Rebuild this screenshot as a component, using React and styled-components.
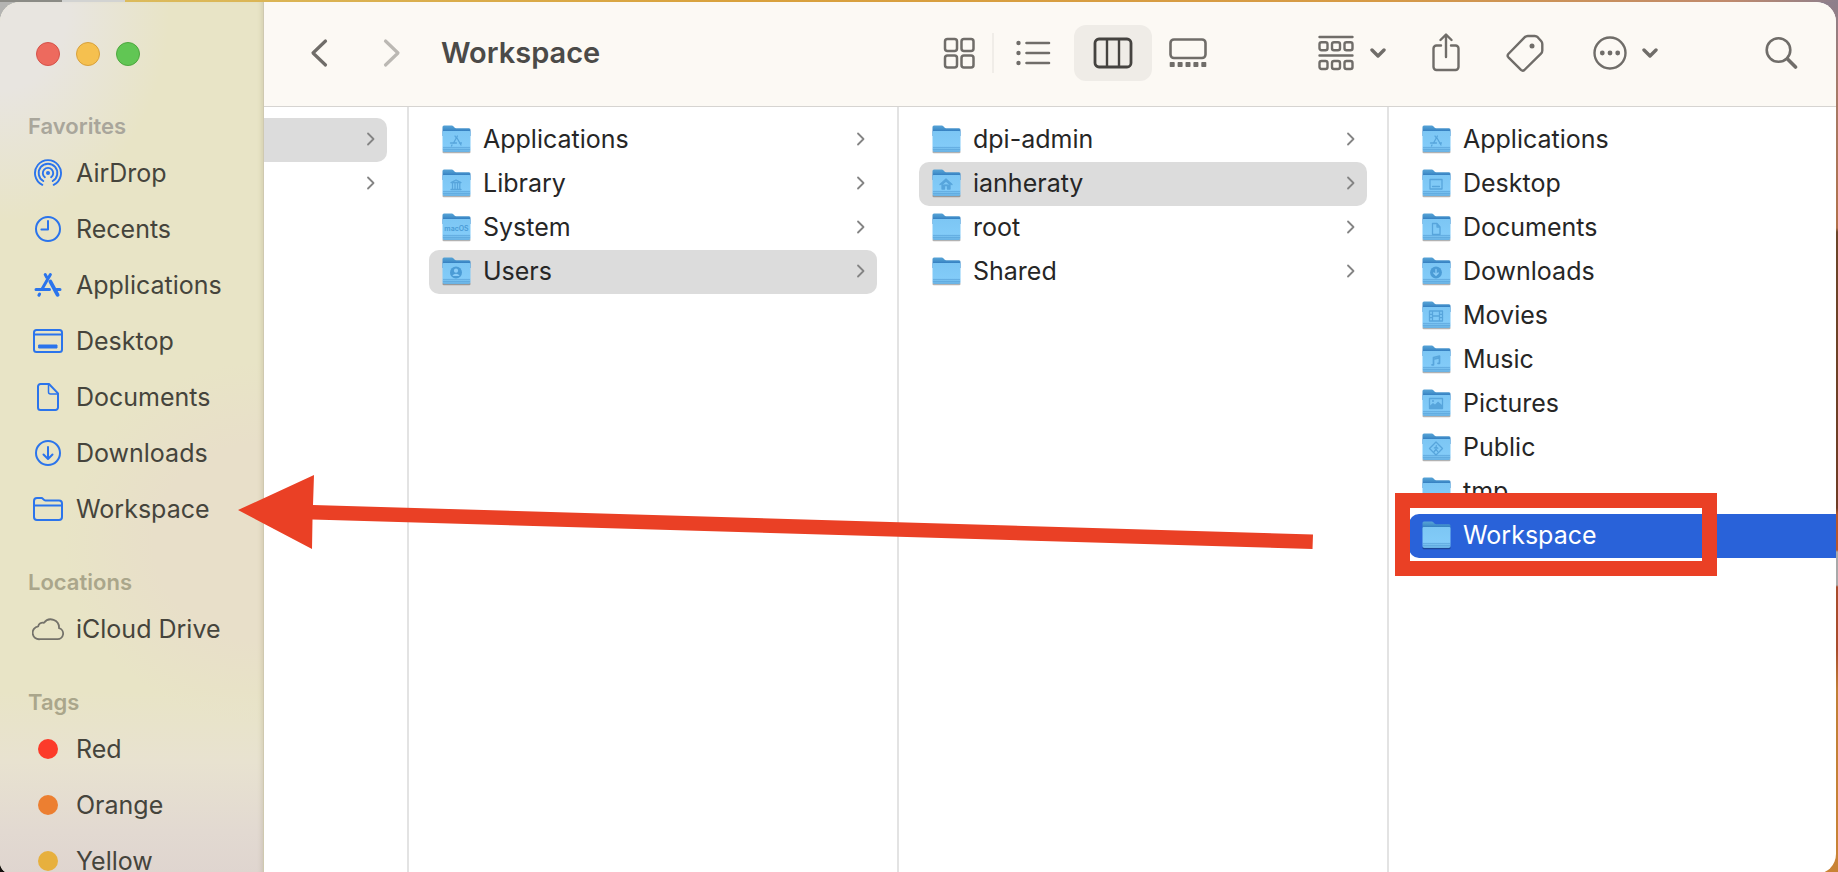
import React from 'react';
import styled, { createGlobalStyle, css } from 'styled-components';

const GlobalStyle = createGlobalStyle`
  *, *::before, *::after { box-sizing: border-box; }
  body {
    margin: 0;
    font-family: Inter, "Liberation Sans", sans-serif;
    color: #262626;
  }
  button { font: inherit; color: inherit; border: 0; background: none; padding: 0; margin: 0; }
  ul { list-style: none; margin: 0; padding: 0; }
  a { color: inherit; text-decoration: none; }
  svg { display: block; flex: none; }
`;

const Desktop = styled.div`
  height: 100vh;
  overflow: hidden;
  padding: 2px 2px 0 0;
  background:
    linear-gradient(#15100e, #15100e) left bottom / 24px 24px no-repeat,
    linear-gradient(90deg, #8b8b86 0 62px, #d2d3d2 62px 125px, transparent 125px) left top / 100% 2px no-repeat,
    linear-gradient(#b4b4b2, #b4b4b2) left top / 24px 24px no-repeat,
    linear-gradient(90deg, #dcc063, #d9a13c 40%, #d69a45 75%, #c08a6c 94%, #8d7f8c) left top / 100% 2px no-repeat,
    linear-gradient(180deg, #8d7f8c, #a57a68 90px, #b0714a 228px, #6b4428 232px, #6f3c24 508px, #b5562c 514px 550px, #a9a9a9 552px 585px, #a84c2c 587px 650px, #c07f35 690px, #c98335);
`;

const Window = styled.div`
  display: flex;
  min-height: 100vh;
  border-radius: 20px 20px 20px 12px;
  overflow: hidden;
  background: #fff;
`;

const Sidebar = styled.nav`
  flex: none;
  width: 264px;
  height: 100vh;
  overflow: hidden;
  box-shadow: inset -1px 0 0 #cfc9b0, inset -5px 0 5px -3px rgba(90, 80, 40, 0.16);
  background:
    linear-gradient(180deg, transparent 690px, #e8e2d0 760px, #e2d9d1 830px, #dfd5cf 872px),
    radial-gradient(ellipse 200px 180px at 264px 540px, #e8dfc9 55%, transparent),
    radial-gradient(ellipse 170px 220px at 0 0, #e8e5e0 40%, transparent),
    #e8e4c6;
`;

const TrafficLights = styled.div`
  display: flex;
  align-items: center;
  gap: 16px;
  height: 104px;
  padding-left: 36px;
`;

const Light = styled.button`
  width: 24px;
  height: 24px;
  border-radius: 50%;
  background: ${(p) => p.$fill};
  border: 1px solid ${(p) => p.$edge};
`;

const SidebarSection = styled.section`
  margin-bottom: 25px;
`;

const SectionTitle = styled.h2`
  margin: 0;
  padding: 1px 0 0 28px;
  font-size: 22px;
  line-height: 38px;
  font-weight: 600;
  color: ${(p) => p.$color};
`;

const SidebarLink = styled.a`
  display: flex;
  align-items: center;
  height: 56px;
  padding-left: 32px;
  gap: 12px;
  font-size: 25px;
  line-height: 32px;
  color: #45443c;
  white-space: nowrap;
`;

const IconSlot = styled.span`
  display: flex;
  justify-content: center;
  width: 32px;
  color: ${(p) => p.$color};
`;

const TagDot = styled.span`
  width: 20px;
  height: 20px;
  border-radius: 50%;
  background: ${(p) => p.$color};
`;

const Main = styled.main`
  flex: 1;
  min-width: 0;
  display: flex;
  flex-direction: column;
`;

const Toolbar = styled.header`
  display: flex;
  align-items: center;
  height: 105px;
  flex: none;
  padding: 0 38px 2px 46px;
  background: #fcf9f4;
  border-bottom: 1px solid #d6d4d1;
  color: #706d69;
`;

const Navigation = styled.div`
  display: flex;
  gap: 55px;
`;

const ToolButton = styled.button`
  display: flex;
  align-items: center;
  gap: ${(p) => p.$gap || 0}px;
  &:disabled { color: #bbb8b3; }
`;

const Title = styled.h1`
  margin: 0 auto 0 40px;
  font-size: 29px;
  line-height: 36px;
  font-weight: 600;
  color: #4b4a48;
`;

const ViewSwitch = styled.div`
  display: flex;
  align-items: center;
  margin-right: 94px;
`;

const ViewButton = styled.button`
  display: flex;
  align-items: center;
  justify-content: center;
  width: ${(p) => p.$width}px;
  height: 56px;
  border-radius: 12px;
  ${(p) => p.$active && css`
    background: #efece7;
    color: #454340;
  `}
`;

const Separator = styled.span`
  width: 2px;
  height: 40px;
  background: #f0ede8;
`;

const Actions = styled.div`
  display: flex;
  align-items: center;
  gap: 46px;
  margin-right: 107px;
`;

const Columns = styled.div`
  flex: 1;
  display: grid;
  grid-template-columns: 145fr 490fr 490fr 447fr;
`;

const Column = styled.ul`
  min-width: 0;
  padding: ${(p) => (p.$bleed === 'left' ? '11px 20px 0 0' : p.$bleed === 'right' ? '11px 0 0 20px' : '11px 20px 0')};
  border-right: ${(p) => (p.$bleed === 'right' ? '0' : '2px solid #e3e3e3')};
`;

const Item = styled.li`
  position: relative;
`;

const Row = styled.a`
  display: flex;
  align-items: center;
  height: 44px;
  gap: 12px;
  padding: 0 12px 2px 13px;
  border-radius: ${(p) => (p.$bleed === 'left' ? '0 10px 10px 0' : p.$bleed === 'right' ? '10px 0 0 10px' : '10px')};
  font-size: 25px;
  line-height: 32px;
  white-space: nowrap;
  ${(p) => p.$state === 'path' && css`background: #dcdcdc;`}
  ${(p) => p.$state === 'selected' && css`background: #2962d9; color: #fff;`}
`;

const RowName = styled.span`
  flex: 1;
  min-width: 0;
`;

const Highlight = styled.span`
  position: absolute;
  z-index: 1;
  left: -14px;
  top: -21px;
  width: 322px;
  height: 83px;
  border: 15px solid #ea4025;
`;

const Arrow = styled.svg`
  position: absolute;
  left: 238px;
  top: 474px;
  pointer-events: none;
`;

const Stroke = ({ w, h, sw = 3, children }) => (
  <svg width={w} height={h} viewBox={`0 0 ${w} ${h}`} fill="none" stroke="currentColor" strokeWidth={sw} strokeLinecap="round" strokeLinejoin="round" aria-hidden="true">
    {children}
  </svg>
);

const sidebarIcons = {
  AirDrop: (
    <Stroke w={28} h={28} sw={1.9}>
      <circle cx="14" cy="14" r="2" fill="currentColor" stroke="none" />
      <path d="M10.900 18.200A5.200 5.200 0 1 1 17.100 18.200" />
      <path d="M9.300 22A9.300 9.300 0 1 1 18.700 22" />
      <path d="M8.300 25.800A13 13 0 1 1 19.700 25.800" />
    </Stroke>
  ),
  Recents: (
    <Stroke w={28} h={28} sw={2}>
      <circle cx="14" cy="14" r="12" />
      <path d="M14 6v8.600H7.400" />
    </Stroke>
  ),
  Applications: (
    <Stroke w={28} h={26} sw={3}>
      <path d="M2 17.500h13.500M22.500 17.500h3.500M11.200 2.600l1.600 2.800M16.400 2.600L8.200 16.800M5.600 22l-.7 1.300" />
      <path d="M16.400 9.600L23.600 22.800" strokeWidth="3.800" />
    </Stroke>
  ),
  Desktop: (
    <Stroke w={30} h={24} sw={2}>
      <rect x="1" y="1" width="28" height="22" rx="2.500" />
      <path d="M1 5.500h28" />
      <rect x="6" y="16" width="18" height="3" fill="currentColor" strokeWidth="1" />
    </Stroke>
  ),
  Documents: (
    <Stroke w={22} h={28} sw={2}>
      <path d="M3.500 1h8.500l9 9.400v14.100a2.500 2.500 0 0 1-2.500 2.500h-15a2.500 2.500 0 0 1-2.500-2.500v-21a2.500 2.500 0 0 1 2.500-2.500z" />
      <path d="M11.500 1.500v7.500a2 2 0 0 0 2 2h7" strokeWidth="1.500" />
    </Stroke>
  ),
  Downloads: (
    <Stroke w={28} h={28} sw={2}>
      <circle cx="14" cy="14" r="12" />
      <path d="M14 8v11.500M9.500 15.500L14 20l4.500-4.500" />
    </Stroke>
  ),
  Workspace: (
    <Stroke w={30} h={24} sw={2}>
      <path d="M1 4a3 3 0 0 1 3-3h4.500c1.500 0 2 2.500 4 2.500H26a3 3 0 0 1 3 3v13.500a3 3 0 0 1-3 3H4a3 3 0 0 1-3-3zM1 8.500h28" />
    </Stroke>
  ),
  'iCloud Drive': (
    <Stroke w={32} h={24} sw={1.8}>
      <path d="M8 22.200a6.400 6.400 0 0 1-1.800-12.800 4.600 4.600 0 0 1 5.800-3.600A8.300 8.300 0 0 1 27 11.200a5.600 5.600 0 0 1-1.600 11z" />
    </Stroke>
  ),
};

const emblems = {
  apps: <path d="M13 12l.6 1M15.400 12l-4 7.300M15 14l4 7M8.500 19h6M17.500 19h2M10 21l-.5 1" />,
  library: <path d="M9 14.500l5-2.500 5 2.500zM10.500 15v6M13 15v6M15.500 15v6M17.800 15v6M9 21.500h10" />,
  user: (
    <>
      <circle cx="14" cy="16.500" r="6" fill="#4b9cd6" stroke="none" />
      <circle cx="14" cy="14.700" r="2.100" fill="#8bcdf8" stroke="none" />
      <path d="M10.300 20a4.200 4.200 0 0 1 7.400 0" fill="#8bcdf8" stroke="none" />
    </>
  ),
  home: <path d="M8 16.500l6-5.500 6 5.500M10 16.500v4.500h2.500v-3.500h3v3.500H18v-4.500l-4-3.500z" fill="#57a5dc" />,
  desktop: <path d="M8 11.500h12v9.500H8zM10.500 18.500h7" />,
  document: <path d="M10.500 11.500h4.500l3 3.500v7.500h-7.500zM15 11.500V15h3" />,
  download: (
    <>
      <circle cx="14" cy="16.500" r="5.900" fill="#4b9cd6" stroke="none" />
      <path d="M14 13.500V19M11.800 17l2.200 2.200 2.200-2.200" stroke="#8bcdf8" />
    </>
  ),
  movies: <path d="M7.500 11h13v10h-13zM10.500 11v10M17.500 11v10M10.500 16h7M7.500 14.300h3M7.500 17.700h3M17.500 14.300h3M17.500 17.700h3" />,
  music: <path d="M11.500 20.500v-7l6-1.500v7M11.500 15.300l6-1.500M10 20.800h1.500M16 19.300h1.500" strokeWidth="1.700" />,
  pictures: (
    <>
      <path d="M7.500 10.500h13v10h-13z" />
      <path d="M8 20v-2.500l3-2.500 2 1.500 3-3 4 3.500v3z" fill="#57a5dc" stroke="none" />
      <circle cx="11" cy="13" r="1" fill="#57a5dc" stroke="none" />
    </>
  ),
  public: <path d="M14 10l6.500 6.500L14 23l-6.500-6.500zM14.300 13.700v.3M14 15v2.200l1.600 2.300M14 17.200l-1.700 2.300M12.300 16l1.700-1 1.800 1.200" />,
};

const FolderIcon = ({ emblem }) => (
  <svg width="29" height="30" viewBox="0 0 29 30" aria-hidden="true">
    <defs>
      <linearGradient id="folderBack" gradientUnits="userSpaceOnUse" x1="0" y1="1" x2="0" y2="9">
        <stop offset="0" stopColor="#5aa6d8" />
        <stop offset=".5" stopColor="#4491cb" />
        <stop offset=".85" stopColor="#2f78bd" />
      </linearGradient>
      <linearGradient id="folderFront" x1="0" y1="0" x2="0" y2="1">
        <stop offset="0" stopColor="#7cc6f4" />
        <stop offset=".7" stopColor="#82cbf8" />
        <stop offset="1" stopColor="#68b1e3" />
      </linearGradient>
    </defs>
    <rect x="0.500" y="26.500" width="28" height="2.700" rx="1.300" fill="#000" opacity=".3" />
    <path d="M0.500 3a1.500 1.500 0 0 1 1.500-1.500h8c1.600 0 2 2.700 4 2.700H27a1.500 1.500 0 0 1 1.500 1.500V12H.5z" fill="url(#folderBack)" />
    <path d="M0.500 8.200a1.200 1.200 0 0 1 1.200-1.200h25.600a1.200 1.200 0 0 1 1.200 1.200v18a1.800 1.800 0 0 1-1.800 1.800H2.300a1.800 1.800 0 0 1-1.800-1.800z" fill="url(#folderFront)" />
    <path d="M1 23.500h27M1 25.500h27" stroke="#5aa5da" strokeWidth=".8" opacity=".8" />
    {emblem === 'macos' ? (
      <text x="14.500" y="19" textAnchor="middle" fontSize="7" fontWeight="600" fill="#4b9cd6">macOS</text>
    ) : (
      <g fill="none" stroke="#57a5dc" strokeWidth="1.300" strokeLinejoin="round" strokeLinecap="round">{emblems[emblem]}</g>
    )}
  </svg>
);

const Disclosure = () => (
  <svg width="10" height="16" viewBox="0 0 10 16" fill="none" stroke="#848484" strokeWidth="1.800" strokeLinecap="round" strokeLinejoin="round" aria-hidden="true">
    <path d="M3 2.500L8.500 8 3 13.500" />
  </svg>
);

const DropMark = () => (
  <Stroke w={16} h={12} sw={3.4}>
    <path d="M2 3l6 6 6-6" />
  </Stroke>
);

const sections = [
  { title: 'Favorites', color: '#a9a69b', items: ['AirDrop', 'Recents', 'Applications', 'Desktop', 'Documents', 'Downloads', 'Workspace'] },
  { title: 'Locations', color: '#aaa68b', items: ['iCloud Drive'] },
];

const tags = [
  ['Red', '#fc3b2a'],
  ['Orange', '#ec7f31'],
  ['Yellow', '#e7b03e'],
];

const columns = [
  { bleed: 'left', label: 'Computer', items: [{ state: 'path' }, {}] },
  {
    label: 'Disk',
    items: [
      { name: 'Applications', emblem: 'apps' },
      { name: 'Library', emblem: 'library' },
      { name: 'System', emblem: 'macos' },
      { name: 'Users', emblem: 'user', state: 'path' },
    ],
  },
  {
    label: 'Users',
    items: [
      { name: 'dpi-admin' },
      { name: 'ianheraty', emblem: 'home', state: 'path' },
      { name: 'root' },
      { name: 'Shared' },
    ],
  },
  {
    bleed: 'right',
    label: 'ianheraty',
    items: [
      { name: 'Applications', emblem: 'apps' },
      { name: 'Desktop', emblem: 'desktop' },
      { name: 'Documents', emblem: 'document' },
      { name: 'Downloads', emblem: 'download' },
      { name: 'Movies', emblem: 'movies' },
      { name: 'Music', emblem: 'music' },
      { name: 'Pictures', emblem: 'pictures' },
      { name: 'Public', emblem: 'public' },
      { name: 'tmp' },
      { name: 'Workspace', state: 'selected', marked: true },
    ],
  },
];

function SidebarPanel() {
  return (
    <Sidebar aria-label="Sidebar">
      <TrafficLights>
        <Light aria-label="Close" $fill="#ed6a5e" $edge="#d5524a" />
        <Light aria-label="Minimize" $fill="#f5c04f" $edge="#d8a13c" />
        <Light aria-label="Zoom" $fill="#61c654" $edge="#4ea73f" />
      </TrafficLights>
      {sections.map((s) => (
        <SidebarSection key={s.title}>
          <SectionTitle $color={s.color}>{s.title}</SectionTitle>
          <ul>
            {s.items.map((name) => (
              <li key={name}>
                <SidebarLink href="#">
                  <IconSlot $color={name === 'iCloud Drive' ? '#74726a' : '#2b74ec'}>{sidebarIcons[name]}</IconSlot>
                  {name}
                </SidebarLink>
              </li>
            ))}
          </ul>
        </SidebarSection>
      ))}
      <SidebarSection>
        <SectionTitle $color="#aaa68b">Tags</SectionTitle>
        <ul>
          {tags.map(([name, color]) => (
            <li key={name}>
              <SidebarLink href="#">
                <IconSlot><TagDot $color={color} /></IconSlot>
                {name}
              </SidebarLink>
            </li>
          ))}
        </ul>
      </SidebarSection>
    </Sidebar>
  );
}

function WindowToolbar() {
  return (
    <Toolbar>
      <Navigation>
        <ToolButton aria-label="Back">
          <Stroke w={18} h={30} sw={3.2}><path d="M15.500 3L3 15l12.500 12" /></Stroke>
        </ToolButton>
        <ToolButton aria-label="Forward" disabled>
          <Stroke w={18} h={30} sw={3.2}><path d="M2.500 3L15 15 2.500 27" /></Stroke>
        </ToolButton>
      </Navigation>
      <Title>Workspace</Title>
      <ViewSwitch>
        <ViewButton $width={66} aria-label="Icon view">
          <Stroke w={32} h={32} sw={2.5}>
            <rect x="2" y="2" width="12" height="12" rx="2.500" />
            <rect x="18.500" y="2" width="12" height="12" rx="2.500" />
            <rect x="2" y="18.500" width="12" height="12" rx="2.500" />
            <rect x="18.500" y="18.500" width="12" height="12" rx="2.500" />
          </Stroke>
        </ViewButton>
        <Separator />
        <ViewButton $width={80} aria-label="List view">
          <Stroke w={36} h={26} sw={2.6}>
            <path d="M10.500 3h22.500M10.500 13h22.500M10.500 23h22.500" />
            <g fill="currentColor" stroke="none">
              <circle cx="2.500" cy="3" r="2.200" /><circle cx="2.500" cy="13" r="2.200" /><circle cx="2.500" cy="23" r="2.200" />
            </g>
          </Stroke>
        </ViewButton>
        <ViewButton $width={78} $active aria-label="Column view" aria-pressed="true">
          <Stroke w={40} h={32} sw={2.8}>
            <rect x="2" y="2" width="36" height="28" rx="4" />
            <path d="M14 3v26M26 3v26" strokeWidth="2.400" />
          </Stroke>
        </ViewButton>
        <ViewButton $width={72} aria-label="Gallery view">
          <Stroke w={38} h={32} sw={2.6}>
            <rect x="1.500" y="2.500" width="35" height="18.500" rx="3.500" />
            <g fill="currentColor" stroke="none">
              {[0, 1, 2, 3, 4].map((i) => <rect key={i} x={0.7 + i * 7.9} y="25" width="5" height="5" rx=".8" />)}
            </g>
          </Stroke>
        </ViewButton>
      </ViewSwitch>
      <Actions>
        <ToolButton aria-label="Group items" $gap={16}>
          <Stroke w={36} h={36} sw={2.4}>
            <path d="M1.500 2h33M1.500 20.500h33" />
            {[1.5, 14, 26.5].map((x) => (
              <React.Fragment key={x}>
                <rect x={x} y="7.300" width="8" height="8" rx="2" />
                <rect x={x} y="26" width="8" height="8" rx="2" />
              </React.Fragment>
            ))}
          </Stroke>
          <DropMark />
        </ToolButton>
        <ToolButton aria-label="Share">
          <Stroke w={28} h={40} sw={2.4}>
            <path d="M9 12.500H4.500a3 3 0 0 0-3 3v18.500a3 3 0 0 0 3 3h19a3 3 0 0 0 3-3V15.500a3 3 0 0 0-3-3H19M14 24V2M8.500 7L14 1.500 19.500 7" />
          </Stroke>
        </ToolButton>
        <ToolButton aria-label="Edit tags">
          <Stroke w={38} h={40} sw={2.4}>
            <path d="M2.300 21L18.800 4.200q1.300-1.200 3-1.200h7q1.700 0 2.900 1.200l3.400 3.800q1.200 1.300 1.200 3v6.600q0 1.800-1.300 3L18.400 37q-1.700 1.400-3.400-.1L2.400 24.300q-1.500-1.600-.1-3.300z" />
            <circle cx="26" cy="13" r="2.500" fill="currentColor" stroke="none" />
          </Stroke>
        </ToolButton>
        <ToolButton aria-label="More actions" $gap={14}>
          <Stroke w={38} h={36} sw={2.4}>
            <circle cx="20" cy="18" r="15.500" />
            <g fill="currentColor" stroke="none">
              <circle cx="12.300" cy="18" r="2.400" /><circle cx="20" cy="18" r="2.400" /><circle cx="27.700" cy="18" r="2.400" />
            </g>
          </Stroke>
          <DropMark />
        </ToolButton>
      </Actions>
      <ToolButton aria-label="Search">
        <Stroke w={33} h={34} sw={2.6}>
          <circle cx="13.500" cy="14" r="11.800" />
          <path d="M22.500 23l8 8" strokeWidth="3.600" />
        </Stroke>
      </ToolButton>
    </Toolbar>
  );
}

export default function App() {
  return (
    <>
      <GlobalStyle />
      <Desktop>
        <Window>
          <SidebarPanel />
          <Main>
            <WindowToolbar />
            <Columns>
              {columns.map((col) => (
                <Column key={col.label} aria-label={col.label} $bleed={col.bleed}>
                  {col.items.map((item, i) => (
                    <Item key={item.name || i}>
                      <Row href="#" $state={item.state} $bleed={col.bleed} aria-label={item.name ? undefined : 'Disk'}>
                        {item.name && <FolderIcon emblem={item.emblem} />}
                        <RowName>{item.name}</RowName>
                        {col.bleed !== 'right' && <Disclosure />}
                      </Row>
                      {item.marked && <Highlight />}
                    </Item>
                  ))}
                </Column>
              ))}
            </Columns>
          </Main>
        </Window>
        <Arrow width="1075" height="78" viewBox="0 0 1075 78" aria-hidden="true">
          <path d="M0 36L76 1L75 31L1075 60.500L1074.500 75L74.500 45.500L74 75z" fill="#ea4025" />
        </Arrow>
      </Desktop>
    </>
  );
}
